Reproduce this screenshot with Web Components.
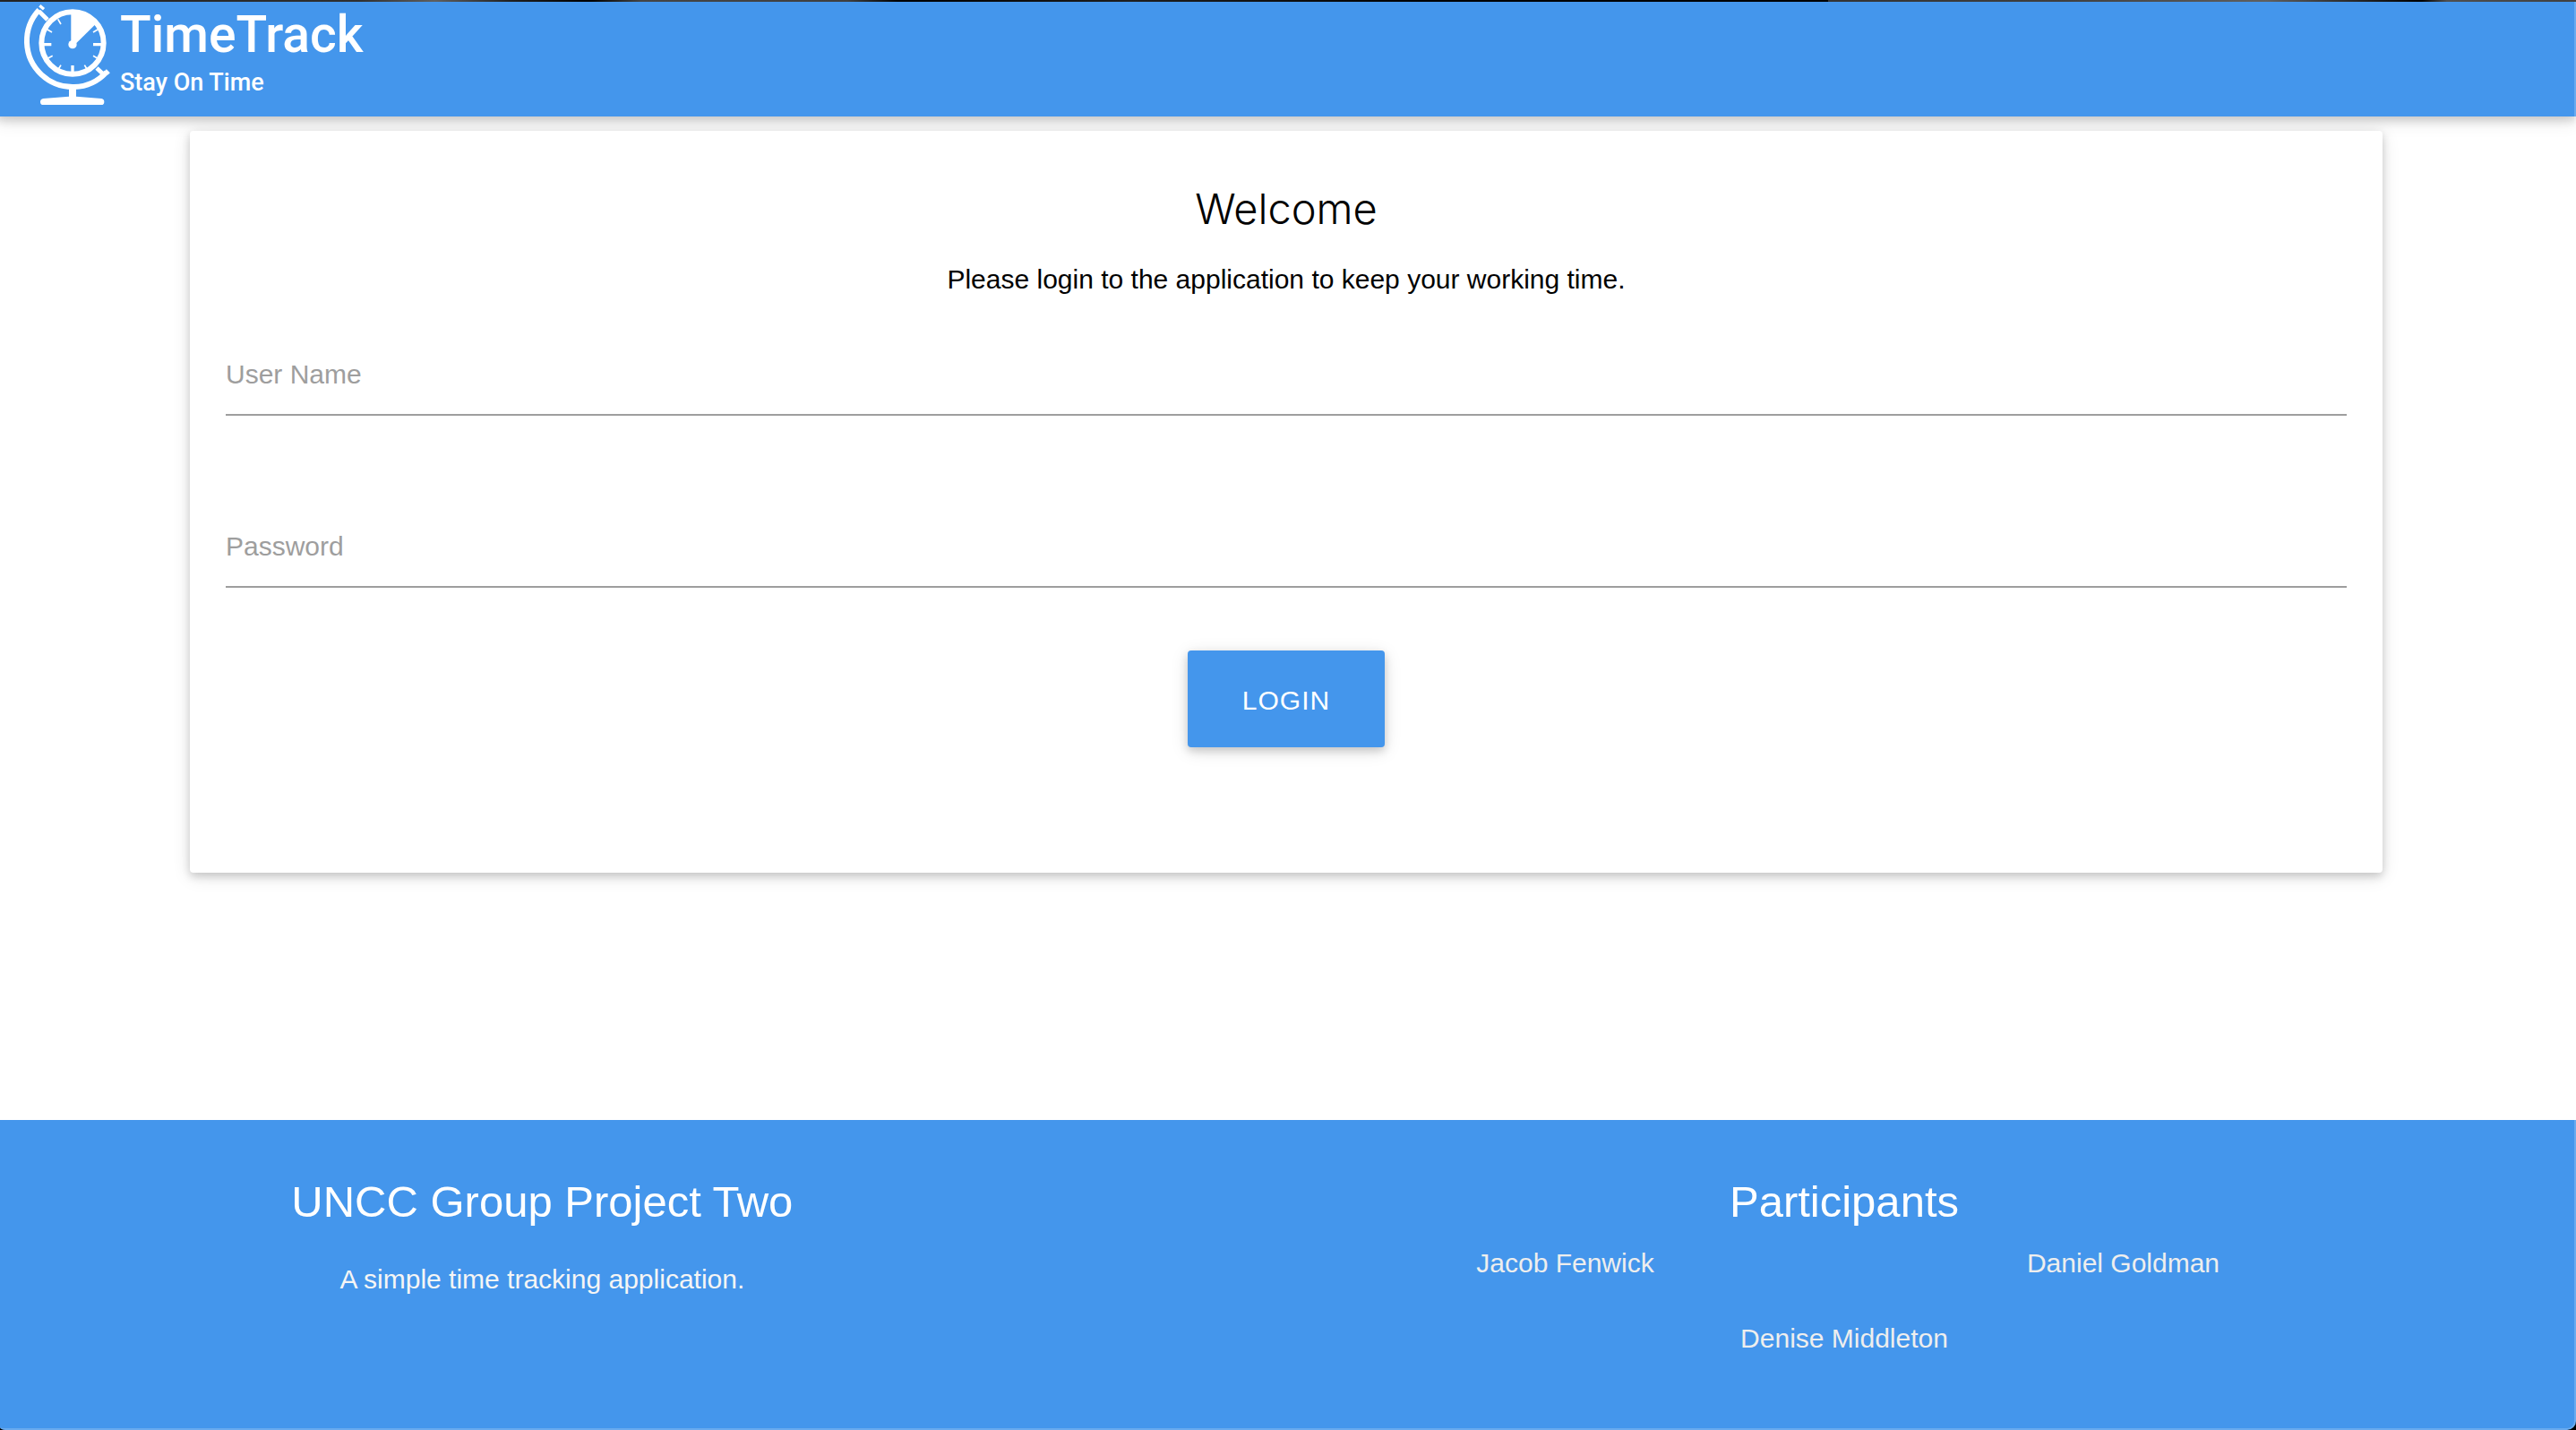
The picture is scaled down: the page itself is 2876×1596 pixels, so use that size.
<!DOCTYPE html>
<html lang="en">
<head>
<meta charset="utf-8">
<meta name="viewport" content="width=device-width, initial-scale=1">
<title>TimeTrack</title>
<style>
  :root { --brand: #4496ec; --muted: #9e9e9e; }
  body {
    margin: 0 0 0 -4px;
    overflow-x: hidden;
    background: #fff;
    color: #000;
    font: 30px/45px "Liberation Sans", Arial, sans-serif;
  }
</style>
</head>
<body>
<time-app>
  <app-header slot="header" name="TimeTrack" tagline="Stay On Time"></app-header>
  <login-card heading="Welcome">
    <span slot="intro">Please login to the application to keep your working time.</span>
    <text-field label="User Name" type="text" autocomplete="username"></text-field>
    <text-field label="Password" type="password" autocomplete="current-password"></text-field>
    <action-button slot="action">Login</action-button>
  </login-card>
  <app-footer slot="footer">
    <span slot="title">UNCC Group Project Two</span>
    <span slot="about">A simple time tracking application.</span>
    <span slot="people-title">Participants</span>
    <person-name>Jacob Fenwick</person-name>
    <person-name>Daniel Goldman</person-name>
    <person-name wide>Denise Middleton</person-name>
  </app-footer>
</time-app>
<script>
  class BaseElement extends HTMLElement {
    connectedCallback() {
      if (this.shadowRoot) return;
      this.attachShadow({ mode: "open" }).innerHTML = this.view();
    }
    attr(name) { return this.getAttribute(name) || ""; }
  }

  customElements.define("time-app", class extends BaseElement {
    view() { return `
      <style>
        :host { display: flex; flex-direction: column; min-height: 100vh; }
        .strip { height: 2px;
                 background: linear-gradient(90deg, #262626, #333 14%, #666 17%, #222 20%, #000 23%, #4a4a4a 25%,
                   #444 33%, #000 35%, #111 40%, #222 44%, #000 56%, #000 71%, #383838 71%, #444 80%,
                   #666 88%, #222 92%, #000 94%, #555 95%, #444); }
        main { flex: 1; padding: 16px 0; }
        .edge { position: fixed; inset: 2px 0 0 0; pointer-events: none;
                border: solid rgba(255,255,255,.2); border-width: 0 2px 2px 0;
                border-radius: 0 0 10px 6px / 0 0 10px 3px; box-shadow: 0 0 0 8px #000; clip-path: inset(0); }
      </style>
      <div class="strip"></div>
      <slot name="header"></slot>
      <main><slot></slot></main>
      <slot name="footer"></slot>
      <div class="edge"></div>`; }
  });

  customElements.define("clock-logo", class extends BaseElement {
    view() { return `
      <style>
        :host { display: block; }
        svg { display: block; width: 98px; height: 114px; }
      </style>
      <svg viewBox="79 12 294 342" fill="none" stroke="#fff" aria-hidden="true">
        <path d="M132 33A152 152 0 1 0 357 242" stroke-width="18"/>
        <path d="M134 19L148 31M354 235L366 247" stroke-width="10"/>
        <path d="M131 37L160 66M325 228L350 251" stroke-width="14"/>
        <circle cx="244" cy="144" r="104" stroke-width="18"/>
        <path d="M239 45Q286 44 321 81L248 153L239 148Z" fill="#fff" stroke="none"/>
        <circle cx="244" cy="149" r="14" fill="#fff" stroke="none"/>
        <path d="M146 149H173M313 149H344M244 219V246" stroke-width="10"/>
        <path d="M160 99L175 108M195 64L205 81M313 108L328 99M162 195L177 187M313 187L327 195M197 231L205 218M284 218L292 231" stroke-width="5"/>
        <path d="M232 296H256V323L341 330Q350 332 350 341Q350 351 340 351H146Q136 351 136 341Q136 332 146 330L232 323Z" fill="#fff" stroke="none"/>
      </svg>`; }
  });

  customElements.define("app-header", class extends BaseElement {
    view() { return `
      <style>
        :host { display: block; background: var(--brand); color: #fff;
                box-shadow: 0 4px 10px rgba(0,0,0,.16), 0 4px 20px rgba(0,0,0,.12); }
        a { display: flex; gap: 10px; height: 128px; box-sizing: border-box; padding: 2px 30px;
            width: max-content; color: inherit; text-decoration: none;
            font-family: Roboto, sans-serif; font-weight: 500; }
        .words { display: flex; flex-direction: column; }
        .name { font-size: 57px; line-height: 70px; }
        .tag { font-size: 27px; line-height: 36px; }
      </style>
      <a href="#"><clock-logo></clock-logo>
        <span class="words">
          <span class="name">${this.attr("name")}</span>
          <span class="tag">${this.attr("tagline")}</span>
        </span>
      </a>`; }
  });

  customElements.define("login-card", class extends BaseElement {
    view() { return `
      <style>
        :host { display: block; width: 85%; margin: 0 auto; box-sizing: border-box;
                padding: 60px 40px 140px; background: #fff; border-radius: 4px;
                box-shadow: 0 4px 10px rgba(0,0,0,.16), 0 4px 20px rgba(0,0,0,.12); }
        h1 { margin: 0 0 29px; text-align: center; font: 300 47px/54px Inter, sans-serif; }
        p { margin: 0 0 40px; text-align: center; }
        form { display: flex; flex-direction: column; }
        .fields { display: flex; flex-direction: column; gap: 102px; }
        .action { display: flex; justify-content: center; padding-top: 70px; }
      </style>
      <h1>${this.attr("heading")}</h1>
      <p><slot name="intro"></slot></p>
      <form>
        <div class="fields"><slot></slot></div>
        <div class="action"><slot name="action"></slot></div>
      </form>`; }
  });

  customElements.define("text-field", class extends BaseElement {
    view() { return `
      <style>
        :host { display: grid; }
        label, input { grid-area: 1 / 1; }
        label { align-self: center; justify-self: start; padding-bottom: 4px; color: var(--muted); cursor: text; }
        input { width: 100%; height: 90px; box-sizing: border-box; margin: 0; padding: 0;
                border: 0; border-bottom: 2px solid var(--muted); border-radius: 0;
                background: transparent; font: inherit; outline: none; }
        input:focus { border-color: var(--brand); }
        input:focus + label, input:valid + label { align-self: start; font-size: 24px; line-height: 24px; }
      </style>
      <input id="field" type="${this.attr("type")}" autocomplete="${this.attr("autocomplete")}" required>
      <label for="field">${this.attr("label")}</label>`; }
  });

  customElements.define("action-button", class extends BaseElement {
    view() { return `
      <style>
        :host { display: block; }
        button { height: 108px; padding: 2px 61px 0; border: 0; border-radius: 4px; cursor: pointer;
                 background: var(--brand); color: #fff; font: inherit; letter-spacing: 1px;
                 text-transform: uppercase;
                 box-shadow: 0 4px 10px rgba(0,0,0,.16), 0 4px 20px rgba(0,0,0,.12); }
      </style>
      <button type="button"><slot></slot></button>`; }
  });

  customElements.define("person-name", class extends BaseElement {
    view() { return `
      <style>
        :host { display: block; text-align: center; color: #eee; }
        :host([wide]) { grid-column: 1 / -1; }
      </style>
      <slot></slot>`; }
  });

  customElements.define("app-footer", class extends BaseElement {
    view() { return `
      <style>
        :host { display: block; padding: 64px 0 80px; background: var(--brand); color: #fff; text-align: center; }
        .container { width: 85%; margin: 0 auto; }
        .row { display: grid; grid-template-columns: repeat(12, 1fr); margin: 0 -22px; }
        .about { grid-column: span 4; }
        .people { grid-column: 7 / span 6; }
        h2 { margin: 0; font-size: 49px; line-height: 54px; font-weight: 400; }
        p { margin: 37px 0 0; color: #f5f5f5; }
        .names { display: grid; grid-template-columns: 1fr 1fr; row-gap: 39px; margin-top: 19px; }
      </style>
      <div class="container"><div class="row">
        <section class="about">
          <h2><slot name="title"></slot></h2>
          <p><slot name="about"></slot></p>
        </section>
        <section class="people">
          <h2><slot name="people-title"></slot></h2>
          <div class="names"><slot></slot></div>
        </section>
      </div></div>`; }
  });
</script>
</body>
</html>
